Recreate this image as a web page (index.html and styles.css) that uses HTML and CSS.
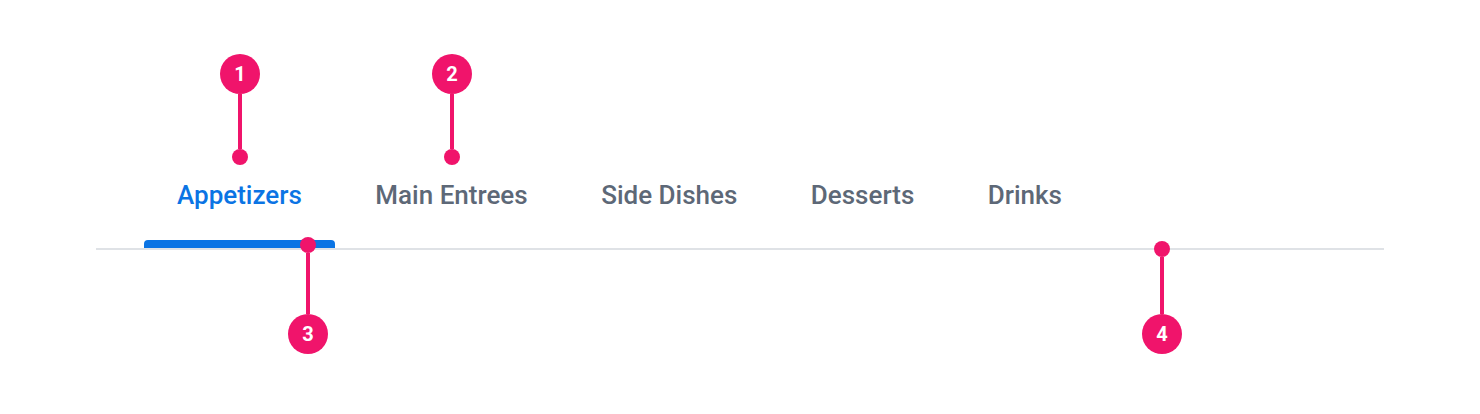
FILE: index.html
```html
<!DOCTYPE html>
<html lang="en">
<head>
<meta charset="utf-8">
<title>Tabs anatomy</title>
<link rel="stylesheet" href="styles.css">
</head>
<body>
<div class="canvas">
  <div class="tabs-wrap">
    <nav class="tablist" role="tablist">
      <div class="tab is-active" role="tab"><span class="label">Appetizers</span><span class="indicator"></span></div>
      <div class="tab" role="tab"><span class="label">Main Entrees</span><span class="indicator"></span></div>
      <div class="tab" role="tab"><span class="label">Side Dishes</span><span class="indicator"></span></div>
      <div class="tab" role="tab"><span class="label">Desserts</span><span class="indicator"></span></div>
      <div class="tab" role="tab"><span class="label">Drinks</span><span class="indicator"></span></div>
    </nav>
  </div>

  <div class="marker marker-down m1"><span class="badge">1</span><span class="stem"></span><span class="dot"></span></div>
  <div class="marker marker-down m2"><span class="badge">2</span><span class="stem"></span><span class="dot"></span></div>
  <div class="marker marker-up m3"><span class="dot"></span><span class="stem"></span><span class="badge">3</span></div>
  <div class="marker marker-up m4"><span class="dot"></span><span class="stem"></span><span class="badge">4</span></div>
</div>
</body>
</html>
```

FILE: styles.css
```css
html, body {
  margin: 0;
  padding: 0;
  background: #ffffff;
}

.canvas {
  position: relative;
  width: 1480px;
  height: 414px;
  font-family: Roboto, "Liberation Sans", Arial, sans-serif;
}

.tabs-wrap {
  padding: 178px 96px 0;
}

.tablist {
  display: flex;
  gap: 7.5px;
  padding-left: 48px;
  border-bottom: 2px solid #dfe2e6;
}

.tab {
  display: flex;
  flex-direction: column;
  align-items: stretch;
  padding: 0;
}

.label {
  display: block;
  padding: 0 33px;
  margin-bottom: 28px;
  font-size: 26px;
  line-height: 34px;
  font-weight: 500;
  color: #5d6877;
  white-space: nowrap;
}

.indicator {
  display: block;
  height: 8px;
  border-radius: 4px 4px 0 0;
  background: transparent;
}

.tab.is-active .label {
  color: #0b74e4;
}

.tab.is-active .indicator {
  background: #0b74e4;
}

/* annotation markers */
.marker {
  position: absolute;
  width: 40px;
  display: flex;
  flex-direction: column;
  align-items: center;
}

.badge {
  width: 40px;
  height: 40px;
  border-radius: 50%;
  background: #f0146b;
  color: #ffffff;
  font-size: 20px;
  font-weight: 700;
  display: flex;
  align-items: center;
  justify-content: center;
}

.stem {
  width: 4px;
  background: #f0146b;
}

.dot {
  width: 16px;
  height: 16px;
  border-radius: 50%;
  background: #f0146b;
}

.m1 { left: 220px; top: 54px; }
.m1 .stem { height: 55px; }

.m2 { left: 432px; top: 54px; }
.m2 .stem { height: 55px; }

.m3 { left: 288px; top: 237px; }
.m3 .stem { height: 61px; }

.m4 { left: 1142px; top: 241px; }
.m4 .stem { height: 57px; }
```
